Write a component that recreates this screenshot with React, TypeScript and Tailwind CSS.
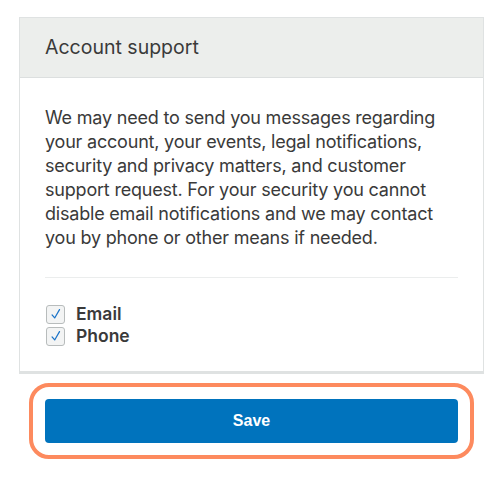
const BODY =
  "We may need to send you messages regarding your account, your events, legal notifications, security and privacy matters, and customer support request. For your security you cannot disable email notifications and we may contact you by phone or other means if needed.";

function Check({ label }: { label: string }) {
  return (
    <label className="flex items-center gap-[11px] h-[22px]">
      <span className="ml-px flex h-[19px] w-[19px] items-center justify-center rounded-[3px] border border-[#b8bcbc] bg-[#f3f4f4]">
        <svg viewBox="0 0 16 16" className="h-[14px] w-[14px]" fill="none" stroke="#1a73c8" strokeWidth={1.4} strokeLinecap="round" strokeLinejoin="round">
          <path d="M3.5 9 L6.5 12.5 L12 3" />
        </svg>
      </span>
      <span className="text-[17.5px] font-semibold text-[#3a3a3a]">{label}</span>
    </label>
  );
}

export default function App() {
  return (
    <div className="w-[503px] h-[480px] bg-white pt-[17px] font-['Inter',sans-serif]">
      <div className="ml-[19px] w-[465px] border border-[#dfe2e2] border-b-[3px]">
        <div className="h-[60px] bg-[#eceeec] border-b border-[#dcdfdf] px-[25px] flex items-center">
          <h2 className="text-[19.5px] text-[#3a3a3a]">Account support</h2>
        </div>
        <div className="px-[25px] pt-[28px] pb-[24px]">
          <p className="text-[18px] leading-[24px] text-[#3a3a3a] tracking-[-0.2px]">{BODY}</p>
          <div className="mt-[27px] border-t border-[#ebeded]" />
          <div className="mt-[25px] flex flex-col">
            <Check label="Email" />
            <Check label="Phone" />
          </div>
        </div>
      </div>
      <div className="mt-[9px] ml-[29px] w-[445px] rounded-[20px] border-4 border-[#fd8a5e] p-[12px]">
        <button className="w-full h-[44px] rounded-[4px] bg-[#0073bd] text-white text-[16px] font-bold font-['Liberation_Sans',sans-serif]">
          Save
        </button>
      </div>
    </div>
  );
}
